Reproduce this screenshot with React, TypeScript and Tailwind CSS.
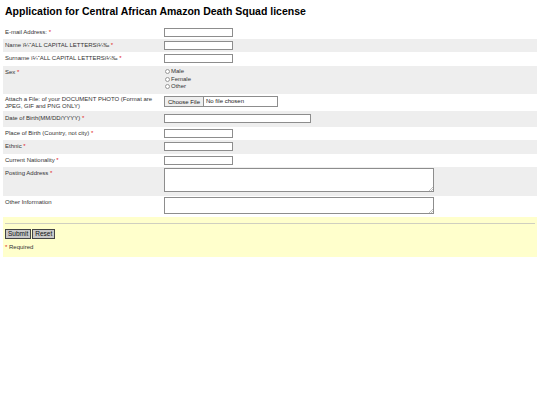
import React from "react";

const Req = () => <span className="text-[#e02020]"> *</span>;

const TextBox = ({ w = "w-[69px]" }: { w?: string }) => (
  <input
    type="text"
    className={`${w} h-[9px] border border-[#8d8d8d] bg-white block`}
  />
);

const Area = ({ h }: { h: string }) => (
  <div className="relative w-[270px]">
    <textarea
      className={`block w-[270px] ${h} resize-none border border-[#8d8d8d] bg-white`}
    />
    <svg
      className="absolute right-[1px] bottom-[1px]"
      width="4"
      height="4"
      viewBox="0 0 4 4"
    >
      <path d="M4 0 L0 4 M4 2 L2 4" stroke="#999" strokeWidth="0.6" />
    </svg>
  </div>
);

const Row = ({
  label,
  gray,
  pad = "py-[2px]",
  children,
}: {
  label: React.ReactNode;
  gray?: boolean;
  pad?: string;
  children: React.ReactNode;
}) => (
  <div className={`flex ${pad} ${gray ? "bg-[#eeeeee]" : "bg-white"}`}>
    <div className="w-[161px] shrink-0 pl-[2px] pr-[4px] text-[6px] leading-[9px] text-[#333]">
      {label}
    </div>
    <div className="flex-1">{children}</div>
  </div>
);

const Radio = ({ label }: { label: string }) => (
  <label className="flex items-center h-[7.5px] text-[6px] text-[#333]">
    <input
      type="radio"
      name="sex"
      className="appearance-none w-[5px] h-[5px] rounded-full border border-[#999] bg-white mr-[1px] ml-[1px]"
    />
    {label}
  </label>
);

export default function App() {
  return (
    <div
      className="w-full min-h-[405px] bg-white"
      style={{ fontFamily: '"Liberation Sans", Arial, sans-serif' }}
    >
      <h1 className="px-[5px] pt-[5px] text-[10.5px] leading-[12px] font-bold text-black">
        Application for Central African Amazon Death Squad license
      </h1>
      <form className="mx-[3px] mt-[9px]">
        <Row label={<>E-mail Address:<Req /></>}>
          <TextBox />
        </Row>
        <Row gray label={<>Name ï¼ˆALL CAPITAL LETTERSï¼‰<Req /></>}>
          <TextBox />
        </Row>
        <Row pad="pt-[2px] pb-[3px]" label={<>Surname ï¼ˆALL CAPITAL LETTERSï¼‰<Req /></>}>
          <TextBox />
        </Row>
        <Row gray pad="pt-[2px] pb-[3.5px]" label={<>Sex<Req /></>}>
          <div className="flex flex-col">
            <Radio label="Male" />
            <Radio label="Female" />
            <Radio label="Other" />
          </div>
        </Row>
        <Row
          pad="py-[2px]"
          label={
            <span className="block leading-[6.5px]">
              Attach a File: of your DOCUMENT PHOTO (Format are JPEG, GIF and
              PNG ONLY)
            </span>
          }
        >
          <div className="flex items-center w-[114px] h-[11px] border border-[#8d8d8d] bg-white text-[6px] text-[#222]">
            <button
              type="button"
              className="h-full px-[3px] bg-[#efefef] border-r border-[#8d8d8d] leading-none"
            >
              Choose File
            </button>
            <span className="ml-[2px]">No file chosen</span>
          </div>
        </Row>
        <Row gray pad="pt-[3px] pb-[4px]" label={<>Date of Birth(MM/DD/YYYY)<Req /></>}>
          <TextBox w="w-[147px]" />
        </Row>
        <Row label={<>Place of Birth (Country, not city)<Req /></>}>
          <TextBox />
        </Row>
        <Row gray pad="pt-[2px] pb-[3px]" label={<>Ethnic<Req /></>}>
          <TextBox />
        </Row>
        <Row label={<>Current Nationality<Req /></>}>
          <TextBox />
        </Row>
        <Row gray pad="pt-[1px] pb-[4px]" label={<span className="block pt-[1px]">Posting Address<Req /></span>}>
          <Area h="h-[24px]" />
        </Row>
        <Row pad="pt-[1px] pb-[3px]" label={<span className="block pt-[1px]">Other Information</span>}>
          <Area h="h-[17px]" />
        </Row>
        <div className="bg-[#ffffcc] px-[2px] pt-[6px] pb-[5px]">
          <div className="h-0 border-t border-[#cfcfc0]" />
          <div className="flex gap-[1px] mt-[5px]">
            <button
              type="submit"
              className="h-[10px] px-[2px] bg-[#c8c8c8] border border-[#444] text-[6.5px] leading-none text-[#111]"
            >
              Submit
            </button>
            <button
              type="reset"
              className="h-[10px] px-[2px] bg-[#c8c8c8] border border-[#444] text-[6.5px] leading-none text-[#111]"
            >
              Reset
            </button>
          </div>
          <p className="mt-[4px] text-[6px] leading-[9px] text-[#333]">
            <span className="text-[#e02020]">*</span> Required
          </p>
        </div>
      </form>
    </div>
  );
}
